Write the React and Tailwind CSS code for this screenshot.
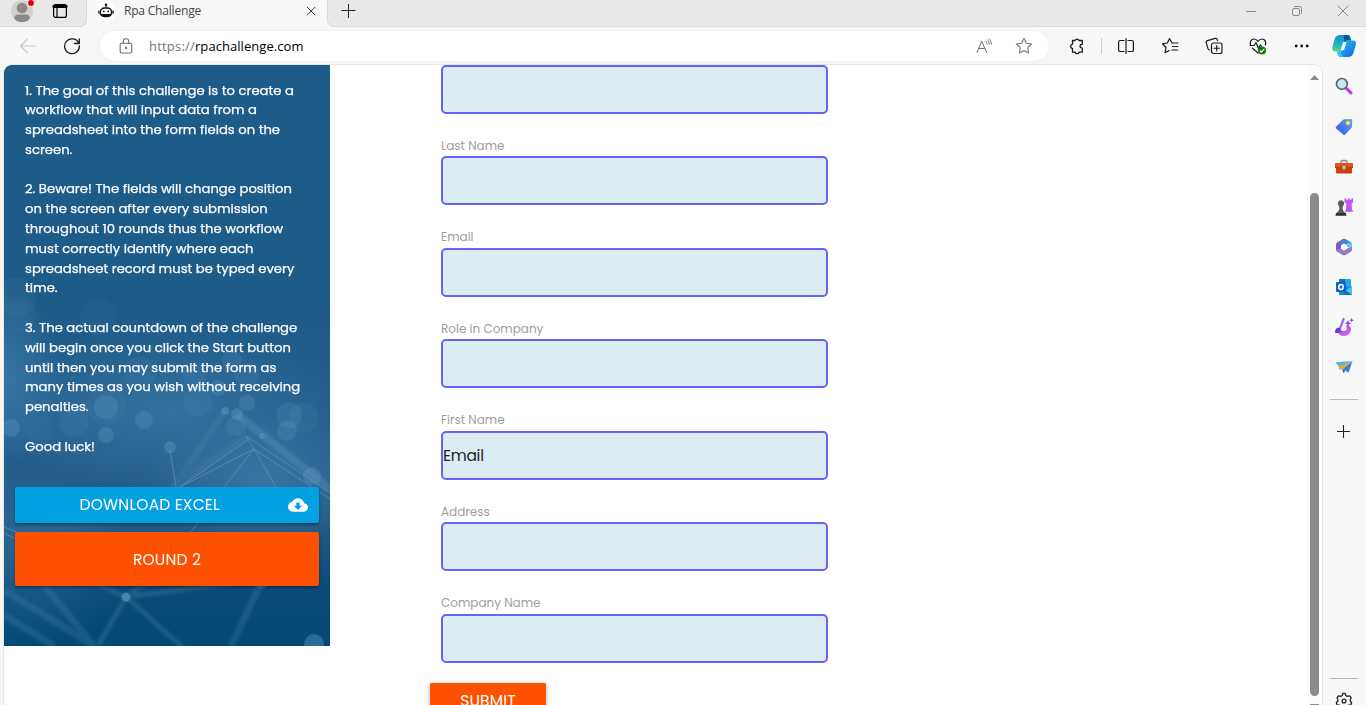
import { useLayoutEffect, useRef } from "react";

const POPPINS = "font-['Poppins','Inter',sans-serif]";
const SEGOE = "font-['Segoe_UI','Open_Sans',sans-serif]";

/* One line of text, tracked so that it spans exactly `w` pixels. */
function Line({ w, className = "", children }) {
  const ref = useRef(null);
  useLayoutEffect(() => {
    const el = ref.current;
    const fit = () => {
      el.style.letterSpacing = "0px";
      const natural = el.getBoundingClientRect().width;
      el.style.letterSpacing = (w - natural) / Math.max(1, el.textContent.length) + "px";
    };
    fit();
    if (document.fonts) document.fonts.ready.then(fit);
  }, [w]);
  return (
    <span ref={ref} className={"inline-block whitespace-pre " + className}>
      {children}
    </span>
  );
}

const instructions = [
  "1. The goal of this challenge is to create a",
  "workflow that will input data from a",
  "spreadsheet into the form fields on the",
  "screen.",
  "",
  "2. Beware! The fields will change position",
  "on the screen after every submission",
  "throughout 10 rounds thus the workflow",
  "must correctly identify where each",
  "spreadsheet record must be typed every",
  "time.",
  "",
  "3. The actual countdown of the challenge",
  "will begin once you click the Start button",
  "until then you may submit the form as",
  "many times as you wish without receiving",
  "penalties.",
  "",
  "Good luck!",
];

const fields = [
  { label: null },
  { label: "Last Name" },
  { label: "Email" },
  { label: "Role in Company" },
  { label: "First Name", value: "Email" },
  { label: "Address" },
  { label: "Company Name" },
];

function Icon({ className = "", s = 20, children, ...rest }) {
  return (
    <svg
      width={s}
      height={s}
      viewBox={`0 0 ${s} ${s}`}
      fill="none"
      stroke="currentColor"
      strokeWidth="1.1"
      strokeLinecap="round"
      strokeLinejoin="round"
      className={"block shrink-0 " + className}
      {...rest}
    >
      {children}
    </svg>
  );
}

function TabStrip() {
  return (
    <div className="flex h-[27px] shrink-0 bg-[#f7f7f7]">
      <div className="flex w-[87px] items-start rounded-br-[7px] border-r border-b border-[#d9d9d9] bg-[#e8e8e8]">
        <svg width="26" height="24" viewBox="0 0 26 24" className="ml-[10px] block">
          <clipPath id="av"><circle cx="12" cy="11.3" r="11" /></clipPath>
          <circle cx="12" cy="11.3" r="11" fill="#d3d0cc" />
          <g clipPath="url(#av)" fill="#8d8985">
            <circle cx="12" cy="8" r="5.3" />
            <path d="M4.2 18.2c0-2.2 1.7-3.7 4-3.7h7.6c2.3 0 4 1.5 4 3.7 0 2-3.400 3.900-7.800 3.900s-7.800-1.900-7.800-3.900z" />
          </g>
          <circle cx="21" cy="3" r="3.8" fill="#e8e8e8" />
          <circle cx="21" cy="3" r="2.900" fill="#e3000b" />
        </svg>
        <Icon s={16} className="mt-[3px] ml-[16px] text-black" strokeWidth="1.2">
          <rect x="1.600" y="1.600" width="12.800" height="12.800" rx="2" />
          <path d="M2 3.300h12" strokeWidth="3.200" />
          <path d="M5 5v9" />
        </Icon>
      </div>
      <div className="flex w-[240px] items-start bg-[#f7f7f7]">
        <svg width="16" height="16" viewBox="0 0 16 16" className="mt-[3px] ml-[11px] block">
          <rect width="16" height="16" fill="#fff" />
          <circle cx="8" cy="1.700" r="1.300" fill="#111" />
          <path d="M8 2.500v2" stroke="#111" strokeWidth="1.200" />
          <rect x="2.300" y="5" width="11.400" height="8.600" rx="4.300" fill="#fff" stroke="#111" strokeWidth="1.500" />
          <path d="M.9 7.600v3.200M15.100 7.600v3.200" stroke="#111" strokeWidth="1.200" />
          <circle cx="5.800" cy="8.400" r=".9" fill="#111" />
          <circle cx="10.200" cy="8.400" r=".9" fill="#111" />
          <path d="M2.500 11h11c-.8 2-2.500 3-4.200 3H6.700c-1.700 0-3.400-1-4.200-3z" fill="#111" />
        </svg>
        <div className={SEGOE + " ml-[10px] text-[12px] leading-[22px] text-[#444]"}>
          <Line w={77}>Rpa Challenge</Line>
        </div>
        <Icon s={10} className="mt-[6px] ml-auto mr-[11px] text-[#333]" strokeWidth="1">
          <path d="M1.200 1.200l7.800 7.800M9 1.200L1.200 9" />
        </Icon>
      </div>
      <div className="flex grow items-start rounded-bl-[7px] border-b border-l border-[#d9d9d9] bg-[#e8e8e8]">
        <Icon s={15} className="mt-[3px] ml-[13px] text-[#222]" strokeLinecap="butt" strokeWidth="1">
          <path d="M7.500 1v14M.5 7.500h14" />
        </Icon>
        <div className="mt-[5px] mr-[17px] ml-auto flex gap-[34px] text-[#8a8a8a]">
          <Icon s={12} strokeWidth="1" strokeLinecap="butt"><path d="M1 6.500h10" /></Icon>
          <Icon s={12} strokeWidth="1">
            <rect x="1.500" y="3.500" width="7" height="7" rx="1.500" />
            <path d="M3.500 1.500h5a2 2 0 0 1 2 2v5" />
          </Icon>
          <Icon s={12} strokeWidth="1"><path d="M1 1l10 10M11 1L1 11" /></Icon>
        </div>
      </div>
    </div>
  );
}

function Toolbar() {
  return (
    <div className="flex h-[37px] shrink-0 items-center bg-[#f7f7f7] text-[#1a1a1a]">
      <Icon s={18} className="ml-[19px] text-[#c8c8c8]"><path d="M16.500 9H1.500M8.500 2L1.500 9l7 7" /></Icon>
      <Icon s={18} className="ml-[26px]" strokeWidth="1.300">
        <path d="M15.800 6.300A7.400 7.400 0 1 0 16.400 9M16.300 1.800v4.700h-4.700" />
      </Icon>
      <div className="ml-[19px] flex h-[30px] w-[949px] items-center rounded-full bg-white shadow-[0_0_2px_rgba(0,0,0,0.08)]">
        <Icon s={14} className="h-[16px] ml-[19px] text-[#6f6f6f]" viewBox="0 0 14 16">
          <rect x="1.200" y="5.200" width="11.600" height="9.800" rx="1.600" />
          <path d="M4.200 5V3.500a2.800 2.800 0 0 1 5.600 0V5" />
          <circle cx="7" cy="10" r=".6" fill="currentColor" />
        </Icon>
        <div className={SEGOE + " ml-[16px] text-[13px] leading-[20px] text-black"}>
          <Line w={46} className="text-[#767676]">https://</Line>
          <Line w={108.5}>rpachallenge.com</Line>
        </div>
        <Icon s={18} className="ml-auto text-[#767676]" strokeWidth="1">
          <path d="M2 15.500L6.800 4l4.700 11.500M3.700 11.500h6.200M10.600 4.200c.9.800 1.300 1.700 1.400 2.900M12.300 2.900c1.300 1.100 1.900 2.500 2 4.300M13.800 1.600c1.700 1.400 2.500 3.300 2.600 5.500" />
        </Icon>
        <Icon s={18} className="mr-[16px] ml-[22px] text-[#767676]" strokeWidth="1.100">
          <path d="M9 1.400l2.300 4.900 5.200.7-3.800 3.700.9 5.300L9 13.500 4.400 16l.9-5.300L1.500 7l5.200-.7z" />
        </Icon>
      </div>
      <Icon s={18} className="ml-[19px]" strokeWidth="1.300">
        <path d="M4.500 3.500h2.600a2.100 2.100 0 0 1 4 0h3.200v3.400a.6.600 0 0 1-.6.600 1.700 1.700 0 0 0 0 3.400.6.600 0 0 1 .6.600v3.700h-3.200a2.100 2.100 0 0 1-4 0H4.500v-3.600a2.300 2.300 0 0 1 0-4.500z" />
      </Icon>
      <div className="ml-[15px] h-[16px] w-px bg-[#d0d0d0]" />
      <Icon s={18} className="ml-[15px]" strokeWidth="1.200">
        <path d="M7 3.500H3.200c-.9 0-1.600.7-1.600 1.600v7.800c0 .9.7 1.600 1.600 1.600H7M11 3.500h3.800c.9 0 1.600.7 1.600 1.600v7.800c0 .9-.7 1.600-1.600 1.600H11M9 1.500v15" />
      </Icon>
      <Icon s={18} className="ml-[26px]" strokeWidth="1.200">
        <path d="M16.800 6H11L8.500 1.600 6.400 6l-5 .8L5 10.300l-.9 5.400 4-2.300M11.500 9.500h5.300M10.800 13h6" />
      </Icon>
      <Icon s={18} className="ml-[26px]" strokeWidth="1.200">
        <rect x="6.500" y="6" width="10.500" height="10.500" rx="2" />
        <path d="M11.750 8.600v5.300M9.100 11.250h5.300M4.400 13c-.8-.3-1.200-.8-1.500-1.600L1.300 5.800c-.3-1 .2-1.900 1.200-2.200l7.600-2.200c1-.3 1.900.2 2.200 1.200l.3 1.100" />
      </Icon>
      <Icon s={18} className="ml-[26px]" strokeWidth="1.200">
        <path d="M1.600 8C.6 5 2 2 5 2c1.800 0 3 .9 4 2.400C10 2.900 11.200 2 13 2c3 0 4.400 3 3.300 6M1 8.500h4.200L7 5.500l2.600 6 1.700-3.500 1 1.200M3.500 11.200L9 16" />
        <circle cx="13" cy="13.500" r="4" fill="#0f7b0f" stroke="none" />
        <path d="M11.200 13.800l1.200 1.200 2.500-2.700" stroke="#fff" />
      </Icon>
      <Icon s={18} className="ml-[26px]" stroke="none" fill="#111">
        <circle cx="3.200" cy="9" r="1.400" /><circle cx="8.700" cy="9" r="1.400" /><circle cx="14.200" cy="9" r="1.400" />
      </Icon>
      <svg width="26" height="24" viewBox="0 0 26 24" className="ml-[20px] block">
        <defs>
          <linearGradient id="cp1" x1="0" y1="0" x2="0" y2="1"><stop offset="0" stopColor="#1492d8" /><stop offset=".6" stopColor="#20b5c0" /><stop offset="1" stopColor="#62d48b" /></linearGradient>
          <linearGradient id="cp2" x1="0" y1="0" x2="1" y2="1"><stop offset="0" stopColor="#22c4ee" /><stop offset="1" stopColor="#1767dc" /></linearGradient>
        </defs>
        <path d="M9.500 1h7.300c1.200 0 1.900.8 2.300 2l1.100 3.500h-3.700c-1.500 0-2.300.9-2.800 2.400l-2 6.100c-.6 1.800-1.400 2.500-3.200 2.500H4.200C2 17.500.7 15.800 1.300 13.200l2.300-8C4.500 2.300 6 1 9.500 1z" fill="url(#cp1)" />
        <path d="M12.500 1h4.300c1.200 0 1.900.8 2.300 2l1.100 3.500h-3.700c-1.500 0-2.300.9-2.800 2.400z" fill="#075a9b" />
        <path d="M16.700 6.500h5.200c2.200 0 3.500 1.700 2.900 4.300l-2.300 8c-.9 2.900-2.400 4.200-5.900 4.200H9.400c-1.200 0-1.900-.8-2.300-2L6 17.500h3c1.800 0 2.600-.7 3.200-2.500l1.600-5c.6-2 1.200-3.500 2.900-3.500z" fill="url(#cp2)" />
        <path d="M6 17.500h3.400l3 5.500h-3c-1.200 0-1.900-.8-2.300-2z" fill="#34c5ee" />
        <path d="M12.200 8h3.300l-2.400 8H9.800z" fill="#f4fbff" />
      </svg>
    </div>
  );
}

const bokeh = [
  [102, 40, 23, 0.03], [12, 232, 20, 0.07], [102, 340, 20, 0.06], [232, 361, 10, 0.12],
  [228, 295, 10, 0.12], [243, 310, 12, 0.1], [191, 311, 12, 0.1], [214, 323, 8, 0.17], [102, 342, 12, 0.16],
  [70, 357, 15, 0.08], [7, 363, 9, 0.22], [102, 370, 8, 0.2], [140, 355, 9, 0.18], [194, 337, 15, 0.08],
  [221, 346, 4, 0.3], [233, 349, 6, 0.24], [243, 338, 8, 0.18], [258, 371, 3, 0.24], [285, 350, 13, 0.13],
  [300, 353, 15, 0.07], [283, 366, 10, 0.17], [166, 382, 6, 0.26], [308, 411, 9, 0.2], [135, 308, 16, 0.07],
  [15, 250, 17, 0.05], [94, 252, 18, 0.05], [122, 532, 4.5, 0.45], [257, 518, 6, 0.3], [310, 579, 10, 0.32],
  [140, 517, 3, 0.2], [35, 366, 14, 0.05],
];

function PanelArt() {
  return (
    <svg className="absolute inset-0 block" width="326" height="581" viewBox="0 0 326 581">
      <defs>
        <linearGradient id="bg" x1="0" y1="0" x2="0" y2="1">
          <stop offset="0" stopColor="#1d5c89" />
          <stop offset=".4" stopColor="#1d5b88" />
          <stop offset=".62" stopColor="#245f8e" />
          <stop offset=".78" stopColor="#235b87" />
          <stop offset=".9" stopColor="#0a4b78" />
          <stop offset="1" stopColor="#024a76" />
        </linearGradient>
        <radialGradient id="glow"><stop offset="0" stopColor="#4c8dbb" stopOpacity=".65" /><stop offset="1" stopColor="#4c8dbb" stopOpacity="0" /></radialGradient>
        <filter id="soft"><feGaussianBlur stdDeviation="1.600" /></filter>
      </defs>
      <rect width="326" height="581" fill="url(#bg)" />
      <ellipse cx="0" cy="310" rx="60" ry="90" fill="url(#glow)" opacity=".75" />
      <ellipse cx="165" cy="345" rx="190" ry="85" fill="url(#glow)" opacity=".6" />
      <ellipse cx="260" cy="415" rx="120" ry="65" fill="url(#glow)" opacity=".75" />
      <ellipse cx="20" cy="490" rx="110" ry="90" fill="url(#glow)" opacity=".5" />
      <g stroke="#76a6c9" fill="none" filter="url(#soft)">
        <path d="M233 349l93 75" strokeWidth="8" opacity=".24" />
        <path d="M221 346l-75 110M243 371l-100 70" strokeWidth="7" opacity=".1" />
        <path d="M122 532L30 490M122 532l-28 49M122 532l62 55M122 532l135-18M122 532l20-14" strokeWidth="5" opacity=".2" />
        <path d="M257 518l-30 63M40 520l50 61M0 525l90 56M0 550l50 31" strokeWidth="7" opacity=".17" />
      </g>
      <g stroke="#8fb9d6" strokeWidth=".9" fill="none" opacity=".42">
        <path d="M242 371l86 58M250 384l-80 41M250 384l76 50M242 371l8 13-30 38M250 384l22 38M245 374l-72 50" />
        <path d="M128 467l-18 9M195 457l-10 12M166 386l6 36M0 462l20 8M0 468l20 10" />
      </g>
      {bokeh.map(([x, y, r, o], i) => (
        <circle key={i} cx={x} cy={y} r={r} fill="#7db3d6" opacity={o} />
      ))}
    </svg>
  );
}

function Instructions() {
  return (
    <aside className="relative h-[581px] w-[326px] shrink-0 overflow-hidden rounded-tl-[8px] bg-[#1d5c89] text-white">
      <PanelArt />
      <div className={POPPINS + " relative flex h-full flex-col px-[11px] pt-[15.500px]"}>
        <div className="pl-[10px] text-[13.200px] leading-[19.800px] whitespace-pre [-webkit-text-stroke:0.25px_white]">
          {instructions.map((t, i) => (
            <div key={i} className="h-[19.800px]">{t}</div>
          ))}
        </div>
        <div className="mt-[30.500px] flex h-[36px] shrink-0 items-center rounded-[2px] bg-[#02a1e1] pr-[11px] text-[15.500px] leading-[36px] tracking-[0.180px] shadow-[0_2px_3px_rgba(0,0,0,0.35)]">
          <div className="pl-[64.500px]">DOWNLOAD EXCEL</div>
          <svg width="20" height="20" viewBox="0 0 24 24" className="ml-auto block" fill="#fff">
            <path d="M19.350 10.040C18.670 6.590 15.640 4 12 4 9.110 4 6.600 5.640 5.350 8.040 2.340 8.360 0 10.910 0 14c0 3.310 2.690 6 6 6h13c2.760 0 5-2.240 5-5 0-2.640-2.050-4.780-4.650-4.960zM17 13l-5 5-5-5h3V9h4v4h3z" />
          </svg>
        </div>
        <div className="mt-[9px] flex h-[54px] shrink-0 items-center justify-center rounded-[2px] bg-[#ff5000] text-[15.500px] tracking-[0.180px] shadow-[0_2px_3px_rgba(0,0,0,0.35)]">
          ROUND 2
        </div>
      </div>
    </aside>
  );
}

function Form() {
  return (
    <main className={POPPINS + " flex grow flex-col overflow-hidden pl-[100px]"}>
      <div className="-mt-[0.1px] pl-[11px]">
        {fields.map((f, i) => (
          <div key={i}>
            {i > 0 && (
              <div className="flex h-[42.450px] items-end pb-[0.400px] text-[12px] leading-[20px] text-[#9e9e9e]">
                {f.label}
              </div>
            )}
            <div className="flex h-[49px] w-[387px] items-center rounded-[5px] border-2 border-[#6464fa] bg-[#dcecf3] pt-px text-[15.500px] tracking-[-0.270px] text-[#222]">
              {f.value}
            </div>
          </div>
        ))}
      </div>
      <div className="mt-[20px] flex h-[36px] w-[116px] shrink-0 items-center justify-center rounded-[2px] bg-[#ff5000] pt-px text-[15.500px] tracking-[0.180px] text-white shadow-[0_1px_4px_rgba(0,0,0,0.35)]">
        SUBMIT
      </div>
    </main>
  );
}

function ScrollBar() {
  return (
    <div className="flex w-[15px] shrink-0 flex-col items-center overflow-hidden rounded-tr-[8px] bg-[#fcfcfc]">
      <svg width="9" height="5" viewBox="0 0 9 5" className="mt-[10px] block shrink-0"><path d="M4.500 0L9 5H0z" fill="#8b8b8b" /></svg>
      <div className="mt-[113px] h-[503px] w-[9px] shrink-0 rounded-full bg-[#8b8b8b]" />
      <div className="mt-[8px] h-px w-[9px] bg-[#8b8b8b]" />
    </div>
  );
}

function SideBar() {
  return (
    <div className="flex w-[43px] shrink-0 flex-col items-center overflow-hidden bg-[#f7f7f7] pr-px">
      <svg width="18" height="18" viewBox="0 0 18 18" className="mt-[13px] block shrink-0">
        <path d="M10.800 10.800l5.200 5" stroke="#b43af0" strokeWidth="3" strokeLinecap="round" />
        <circle cx="6.900" cy="6.900" r="5.400" fill="#c5e6fb" stroke="#666" strokeWidth="1.700" />
      </svg>
      <svg width="18" height="18" viewBox="0 0 18 18" className="mt-[23px] block shrink-0">
        <defs><linearGradient id="tag" x1="1" y1="0" x2="0" y2="1"><stop offset="0" stopColor="#68a4ff" /><stop offset="1" stopColor="#3150e8" /></linearGradient></defs>
        <path d="M9.500 1.200L16 1c.8 0 1.200.4 1.200 1.200l-.2 6.300c0 .6-.2 1-.6 1.400l-6 6.400c-.8.800-1.600.8-2.400 0L1.300 10.800c-.8-.8-.8-1.600 0-2.400l6.800-6.700c.4-.3.800-.5 1.400-.5z" fill="url(#tag)" />
        <circle cx="13" cy="4.900" r="1.700" fill="#e9f2fb" stroke="#f2c318" strokeWidth="1.200" />
      </svg>
      <svg width="18" height="18" viewBox="0 0 18 18" className="mt-[22px] block shrink-0">
        <path d="M6 5V3.800C6 2.800 6.600 2.500 7.400 2.500h3.200c.8 0 1.400.3 1.400 1.300V5" fill="none" stroke="#8b8b8b" strokeWidth="1.400" />
        <rect x="1" y="8" width="16" height="7.500" rx="1" fill="#c8430c" />
        <rect x="0" y="5" width="18" height="5" rx="1" fill="#e0571b" />
        <path d="M0 9.500h18" stroke="#a7370d" strokeWidth=".8" />
        <circle cx="9" cy="9.500" r="1.900" fill="#c9cdd2" stroke="#777" strokeWidth=".6" />
      </svg>
      <svg width="20" height="20" viewBox="0 0 20 20" className="mt-[21px] block shrink-0">
        <path d="M10.500 1.500h1.800v1.400h1.400V1.500h2.200v1.400h1.400V1.500H19v3.800l-1.300 1.200.3 6.500h.8v1.800h-7.600V13h.8l.3-6.500-1.800-1.200z" fill="#bf58f3" />
        <path d="M7 3.300a3.200 3.200 0 0 1 2 5.700v1.300H8.500c.1 3 1 4.300 2.700 5.400.9.600 1.300 1.300 1.300 3.300h-11c0-2 .4-2.700 1.300-3.300 1.700-1.100 2.600-2.400 2.700-5.400H5V9a3.200 3.200 0 0 1 2-5.700z" fill="#5c5c5c" />
        <path d="M2 17h10" stroke="#333" strokeWidth="2" />
      </svg>
      <svg width="18" height="18" viewBox="0 0 18 18" className="mt-[21px] block shrink-0">
        <path d="M8 1L3 4C1.600 4.800 1 5.700 1 7v5.500L6 11V7.500L12 4.500z" fill="#7b5fc0" />
        <path d="M8 1c.8-.4 1.600-.4 2.400 0L15.500 4c1 .6 1.500 1.400 1.500 2.500V10l-5-1.500V7L6 5z" fill="#3f86d8" />
        <path d="M12 5l4.500.2c.4.500.5 1 .5 1.700V10l-5-2z" fill="#62cdf4" />
        <path d="M17 9v2.500c0 1.200-.5 2-1.500 2.600l-5 2.800c-1 .5-2 .5-3 0L2.500 14C1.500 13.400 1 12.700 1 12l5-2 3 2.500L13 10z" fill="#9a78cf" />
        <path d="M9 5.600l3 1.700v3.400l-3 1.700-3-1.700V7.300z" fill="#f7f7f7" />
      </svg>
      <svg width="18" height="18" viewBox="0 0 18 18" className="mt-[22px] block shrink-0">
        <rect x="4" y="1" width="12" height="11" rx="1" fill="#29a5e8" />
        <path d="M4 1h6v6H4z" fill="#0f72c6" />
        <path d="M4 8.500h13V16c0 .6-.3 1-1 1H5c-.6 0-1-.4-1-1z" fill="#1689d2" />
        <path d="M17 8.500L9.500 13l7.500 4z" fill="#43c5f2" />
        <path d="M11 12.500l6 4.500H8z" fill="#1270b8" />
        <rect x="1" y="4" width="10" height="10" rx="1" fill="#0c67bd" />
        <ellipse cx="6" cy="9" rx="2.200" ry="2.500" fill="none" stroke="#fff" strokeWidth="1.400" />
      </svg>
      <svg width="20" height="20" viewBox="0 0 20 20" className="mt-[21px] block shrink-0">
        <defs><linearGradient id="pn" x1="0" y1="0" x2="1" y2="1"><stop offset="0" stopColor="#7946dd" /><stop offset="1" stopColor="#ed66ee" /></linearGradient></defs>
        <path d="M3 13.500C4 17 6.500 19 9.800 19c4.200 0 7.200-3.200 7.200-7 0-2.400-1.600-4-4.200-3.800-.9.100-1 .9-.5 1.500 1.200 1.500.6 3.700-1.400 4.300-1.800.5-3.500-.3-4.200-2z" fill="url(#pn)" />
        <path d="M9.600 2L5.500 13" stroke="#9a6be8" strokeWidth="2.200" strokeLinecap="round" />
        <path d="M1 15.500c0-3.500 2-5.500 4.700-4.500 1.500 1.700.8 4.300-1.400 4.900-1.100.3-2.200.1-3.300-.4z" fill="#6a3ccd" />
        <path d="M14 3l1 2.300 2.300 1-2.300 1-1 2.300-1-2.300-2.300-1 2.300-1zM17.600 1l.7 1.500 1.500.7-1.500.7-.7 1.500-.7-1.500-1.500-.7 1.500-.7z" fill="#8b4ee0" />
      </svg>
      <svg width="18" height="18" viewBox="0 0 18 18" className="mt-[21px] block shrink-0">
        <path d="M.3 4.200L17.500 3 4.500 9z" fill="#4bb4f0" />
        <path d="M17.500 3l-4 11.800L8 10.500z" fill="#2c86dd" />
        <path d="M17.500 3L3.500 8.500l.8 3.500 3.200-1.300z" fill="#f5a623" />
        <path d="M7 10.700l1.500 4.500 2-2.900z" fill="#1b66b8" />
        <path d="M3.500 8.500L17.500 3 7 11z" fill="#efa51d" />
      </svg>
      <div className="mt-[23px] h-px w-[28px] shrink-0 bg-[#b9b9b9]" />
      <Icon s={13} className="mt-[25px] mr-px text-[#222]" strokeLinecap="butt" strokeWidth="1.100"><path d="M6.500 0v13M0 6.500h13" /></Icon>
      <div className="mt-[240px] h-px w-[28px] shrink-0 bg-[#b9b9b9]" />
      <Icon s={18} className="mt-[13px] text-[#222]" strokeWidth="1.300">
        <path d="M7.200 3.500L8 1.300h2l.8 2.200 1.500.9 2.400-.5 1.500 1.900-1 2.200.3 1.400 1.200 1-.9 2.600-2.500.2-1 1 .2 2.300-2.300 1-1.200-1.400-1.200 1.400-2.400-1 .2-2.300-1-1-2.500-.2-.8-2.600 1.500-1 .2-1.400-1-2.200 1.400-1.900 2.400.5z" />
        <circle cx="9" cy="9" r="1.900" />
      </Icon>
    </div>
  );
}

export default function App() {
  return (
    <div className="flex h-[705px] w-[1366px] flex-col overflow-hidden bg-[#f7f7f7]">
      <TabStrip />
      <Toolbar />
      <div className="flex min-h-0 grow">
        <div className="flex w-[1323px] shrink-0 overflow-hidden pl-[3px]">
          <div className="flex h-[641px] grow overflow-hidden rounded-t-[9px] border-t border-r border-l border-[#e6e6e6] bg-white">
            <Instructions />
            <Form />
            <ScrollBar />
          </div>
        </div>
        <SideBar />
      </div>
    </div>
  );
}
